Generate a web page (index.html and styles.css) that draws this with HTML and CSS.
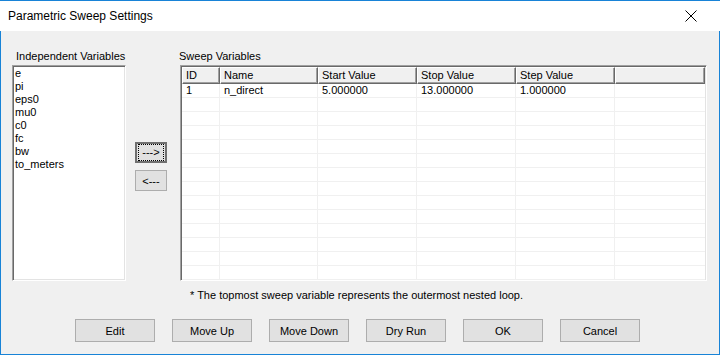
FILE: index.html
```html
<!DOCTYPE html>
<html>
<head>
  <meta charset="utf-8">
  <link rel="stylesheet" href="styles.css">
</head>
<body>
  <div class="window">
    <div class="titlebar">
      <span class="title">Parametric Sweep Settings</span>
      <svg class="close" width="12" height="12" viewBox="0 0 12 12">
        <path d="M0.5 0.5 L11.5 11.5 M11.5 0.5 L0.5 11.5" stroke="#000" stroke-width="1"/>
      </svg>
    </div>

    <div class="body">
      <div class="main">
        <div class="col-left">
          <div class="label label-left">Independent Variables</div>
          <div class="listbox">
            <div>e</div>
            <div>pi</div>
            <div>eps0</div>
            <div>mu0</div>
            <div>c0</div>
            <div>fc</div>
            <div>bw</div>
            <div>to_meters</div>
          </div>
        </div>

        <div class="col-mid">
          <button class="arrow default"><span class="focus">---&gt;</span></button>
          <button class="arrow">&lt;---</button>
        </div>

        <div class="col-right">
          <div class="label label-right">Sweep Variables</div>
          <div class="grid">
            <div class="grid-head">
              <div class="hcell c-id">ID</div>
              <div class="hcell c-name">Name</div>
              <div class="hcell c-val">Start Value</div>
              <div class="hcell c-val">Stop Value</div>
              <div class="hcell c-val">Step Value</div>
              <div class="hcell c-fill"></div>
            </div>
            <div class="grid-rows">
              <div class="row">
                <div class="cell c-id">1</div>
                <div class="cell c-name">n_direct</div>
                <div class="cell c-val">5.000000</div>
                <div class="cell c-val">13.000000</div>
                <div class="cell c-val">1.000000</div>
                <div class="cell c-fill"></div>
              </div>
              <div class="row"><div class="cell c-id"></div><div class="cell c-name"></div><div class="cell c-val"></div><div class="cell c-val"></div><div class="cell c-val"></div><div class="cell c-fill"></div></div>
              <div class="row"><div class="cell c-id"></div><div class="cell c-name"></div><div class="cell c-val"></div><div class="cell c-val"></div><div class="cell c-val"></div><div class="cell c-fill"></div></div>
              <div class="row"><div class="cell c-id"></div><div class="cell c-name"></div><div class="cell c-val"></div><div class="cell c-val"></div><div class="cell c-val"></div><div class="cell c-fill"></div></div>
              <div class="row"><div class="cell c-id"></div><div class="cell c-name"></div><div class="cell c-val"></div><div class="cell c-val"></div><div class="cell c-val"></div><div class="cell c-fill"></div></div>
              <div class="row"><div class="cell c-id"></div><div class="cell c-name"></div><div class="cell c-val"></div><div class="cell c-val"></div><div class="cell c-val"></div><div class="cell c-fill"></div></div>
              <div class="row"><div class="cell c-id"></div><div class="cell c-name"></div><div class="cell c-val"></div><div class="cell c-val"></div><div class="cell c-val"></div><div class="cell c-fill"></div></div>
              <div class="row"><div class="cell c-id"></div><div class="cell c-name"></div><div class="cell c-val"></div><div class="cell c-val"></div><div class="cell c-val"></div><div class="cell c-fill"></div></div>
              <div class="row"><div class="cell c-id"></div><div class="cell c-name"></div><div class="cell c-val"></div><div class="cell c-val"></div><div class="cell c-val"></div><div class="cell c-fill"></div></div>
              <div class="row"><div class="cell c-id"></div><div class="cell c-name"></div><div class="cell c-val"></div><div class="cell c-val"></div><div class="cell c-val"></div><div class="cell c-fill"></div></div>
              <div class="row"><div class="cell c-id"></div><div class="cell c-name"></div><div class="cell c-val"></div><div class="cell c-val"></div><div class="cell c-val"></div><div class="cell c-fill"></div></div>
              <div class="row"><div class="cell c-id"></div><div class="cell c-name"></div><div class="cell c-val"></div><div class="cell c-val"></div><div class="cell c-val"></div><div class="cell c-fill"></div></div>
              <div class="row"><div class="cell c-id"></div><div class="cell c-name"></div><div class="cell c-val"></div><div class="cell c-val"></div><div class="cell c-val"></div><div class="cell c-fill"></div></div>
              <div class="row"><div class="cell c-id"></div><div class="cell c-name"></div><div class="cell c-val"></div><div class="cell c-val"></div><div class="cell c-val"></div><div class="cell c-fill"></div></div>
            </div>
          </div>
        </div>
      </div>

      <div class="note">* The topmost sweep variable represents the outermost nested loop.</div>

      <div class="button-row">
        <button class="btn">Edit</button>
        <button class="btn">Move Up</button>
        <button class="btn">Move Down</button>
        <button class="btn">Dry Run</button>
        <button class="btn">OK</button>
        <button class="btn">Cancel</button>
      </div>
    </div>
  </div>
</body>
</html>
```

FILE: styles.css
```css
* {
  margin: 0;
  padding: 0;
  box-sizing: border-box;
}

body {
  width: 720px;
  height: 355px;
  overflow: hidden;
  font-family: 'Liberation Sans', Arial, sans-serif;
  font-size: 11px;
  color: #000;
  background: #f0f0f0;
}

.window {
  width: 720px;
  height: 355px;
  display: flex;
  flex-direction: column;
  border: 1px solid #1883d7;
  border-top: none;
  background: #f0f0f0;
}

/* Title bar */
.titlebar {
  height: 31px;
  background: #ffffff;
  display: flex;
  align-items: center;
  justify-content: space-between;
  padding: 0 23px 0 8px;
  margin: 0 -1px;
  border-top: 1px solid #1883d7;
}

.title {
  font-family: 'Liberation Sans', Arial, sans-serif;
  font-size: 12px;
  color: #000;
}

.close {
  display: block;
}

/* Dialog body */
.body {
  flex: 1;
  display: flex;
  flex-direction: column;
  padding: 19px 0 0 11px;
}

.main {
  display: flex;
}

.label {
  height: 13px;
  line-height: 13px;
  margin-bottom: 2px;
  white-space: nowrap;
}

.label-left {
  padding-left: 4px;
}

.label-right {
  margin-left: -1px;
}

.col-left {
  width: 114px;
}

.listbox {
  height: 216px;
  background: #fff;
  border: 1px solid;
  border-color: #a0a0a0 #ffffff #ffffff #a0a0a0;
  box-shadow: inset 1px 1px 0 #696969, inset -1px -1px 0 #e3e3e3;
  padding: 1px 2px;
  line-height: 13px;
}

.col-mid {
  width: 54px;
  padding: 92px 0 0 9px;
  display: flex;
  flex-direction: column;
  gap: 7px;
}

.arrow {
  width: 32px;
  height: 21px;
  background: #e1e1e1;
  border: 1px solid #adadad;
  font-family: 'Liberation Sans', Arial, sans-serif;
  font-size: 11px;
  color: #000;
  display: flex;
  align-items: center;
  justify-content: center;
}

.arrow.default {
  border: 2px solid #707070;
}

.focus {
  border: 1px dotted #000;
  padding: 2px 2px;
  line-height: 11px;
  width: 26px;
  text-align: center;
}

.col-right {
  width: 527px;
}

/* Sweep variables grid */
.grid {
  height: 216px;
  background: #fff;
  border: 1px solid;
  border-color: #a0a0a0 #ffffff #ffffff #a0a0a0;
  box-shadow: inset 1px 1px 0 #696969, inset -1px -1px 0 #e3e3e3;
  padding: 1px;
  overflow: hidden;
}

.grid-head {
  display: flex;
  height: 17px;
}

.hcell {
  background: #f0f0f0;
  border: 1px solid;
  border-color: #ffffff #696969 #696969 #ffffff;
  box-shadow: inset -1px -1px 0 #a0a0a0;
  padding: 0 3px;
  line-height: 14px;
  white-space: nowrap;
}

.c-id { width: 38px; }
.c-name { width: 98px; }
.c-val { width: 99px; }
.c-fill { flex: 1; }

.row {
  display: flex;
  height: 14px;
}

.cell {
  border-right: 1px solid #f0f0f0;
  border-bottom: 1px solid #f0f0f0;
  padding: 0 4px;
  line-height: 13px;
  white-space: nowrap;
}

.cell.c-fill {
  border-right: none;
}

.note {
  margin: 8px 0 0 178px;
  height: 13px;
  line-height: 13px;
}

/* Bottom buttons */
.button-row {
  display: flex;
  gap: 17px;
  margin: 17px 0 0 63px;
}

.btn {
  width: 80px;
  height: 23px;
  background: #e1e1e1;
  border: 1px solid #adadad;
  font-family: 'Liberation Sans', Arial, sans-serif;
  font-size: 11px;
  color: #000;
}
```
